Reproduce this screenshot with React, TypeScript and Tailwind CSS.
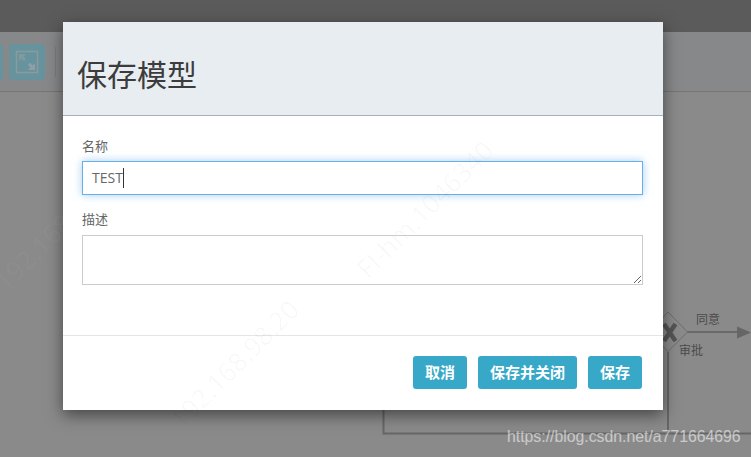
const cjk = "font-['Open_Sans','Noto_Sans_CJK_SC',sans-serif]";

// Faint diagonal IP watermark that sits over the whole screenshot
const marks = [
  { text: '192.168.98.20', left: 150, top: 345, color: 'text-black/[0.03]' },
  { text: '192.168.98', left: 470, top: 40, color: 'text-black/[0.02]' },
  { text: 'FI-hm.1046340', left: 335, top: 190, color: 'text-black/[0.03]' },
  { text: '192.168.98', left: -20, top: 220, color: 'text-white/[0.04]' },
];

function FitIcon() {
  return (
    <svg width="26" height="26" viewBox="0 0 26 26" fill="none">
      <rect x="2.500" y="2.500" width="21" height="21" stroke="#8d9a9c" strokeWidth="1.500" />
      <path d="M5 5h7l-2.400 2.400 2.600 2.600-2.200 2.200-2.600-2.600L5 12z" fill="#7f9ba2" />
      <path d="M21 21h-7l2.400-2.400-2.600-2.600 2.200-2.200 2.600 2.600L21 14z" fill="#8fa0a4" />
    </svg>
  );
}

function Diagram() {
  return (
    <svg className="absolute left-[360px] top-[300px]" width="391" height="140" viewBox="360 300 391 140" fill="none">
      <path d="M383.500 405V433.500H751" stroke="#666" strokeWidth="2" />
      <path d="M668 352V433" stroke="#666" strokeWidth="2" />
      <path d="M687 332H738" stroke="#6a6a6a" strokeWidth="2" />
      <path d="M737 326.500L751 332.500L737 338.500z" fill="#666" />
      <path d="M668 312L687.500 332L668 351.500L650 332z" fill="#8a8a8a" stroke="#6e6e6e" />
      <path d="M664 324L675.500 341M675.500 324L664 341" stroke="#555" strokeWidth="4.500" />
    </svg>
  );
}

export default function App() {
  return (
    <div className={`relative w-[751px] h-[457px] overflow-hidden bg-[#8a8a8a] ${cjk}`}>
      <div className="h-8 bg-[#5b5b5b]" />
      <div className="flex items-center h-[60px] bg-[#86888a] border-b border-[#757575]">
        <div className="w-[3px] h-9 mr-1.5 rounded-r bg-[#66939e]" />
        <div className="flex items-center justify-center w-9 h-9 rounded bg-[#66939e]">
          <FitIcon />
        </div>
        <div className="w-px h-[30px] ml-2.5 bg-[#7a7c7e]" />
      </div>

      <Diagram />
      <span className="absolute left-[696px] top-[312px] text-xs leading-4 text-[#4a4a4a]">同意</span>
      <span className="absolute left-[679px] top-[343px] text-xs leading-4 text-[#4a4a4a]">审批</span>

      <div className="absolute left-[63px] top-[22px] w-[600px] h-[388px] flex flex-col bg-white shadow-[0_5px_15px_rgba(0,0,0,0.5)]">
        <div className="flex items-center h-[94px] pl-[14px] pt-[12px] bg-[#e8edf1] border-b border-[#a8b0bc]">
          <h1 className="text-[30px] leading-10 font-normal text-[#3c3c3c]">保存模型</h1>
        </div>
        <div className="flex flex-col h-[220px] px-[19px] pt-[21px] border-b border-[#e5e5e5]">
          <label className="text-[13px] leading-[18px] text-[#666]">名称</label>
          <div className="flex items-center w-[561px] h-[34px] mt-[6px] pl-[9px] border border-[#66afe9] shadow-[0_0_8px_rgba(102,175,233,0.6)]">
            <span className="text-sm text-[#666]">TEST</span>
            <span className="w-px h-5 bg-[#333]" />
          </div>
          <label className="mt-[15px] text-[13px] leading-[18px] text-[#666]">描述</label>
          <div className="relative w-[561px] h-[50px] mt-[7px] border border-[#ccc]">
            <svg className="absolute right-0 bottom-0" width="10" height="10" viewBox="0 0 10 10" fill="none">
              <path d="M9 2L2 9M9 6L6 9" stroke="#666" />
            </svg>
          </div>
        </div>
        <div className="flex justify-end gap-[11px] pt-5 pr-[21px]">
          <button className="w-[54px] h-[33px] pb-px rounded-[3px] bg-[#37a8c7] text-[15px] font-bold text-white">取消</button>
          <button className="w-[99px] h-[33px] pb-px rounded-[3px] bg-[#37a8c7] text-[15px] font-bold text-white">保存并关闭</button>
          <button className="w-[54px] h-[33px] pb-px rounded-[3px] bg-[#37a8c7] text-[15px] font-bold text-white">保存</button>
        </div>
      </div>

      {marks.map((m, i) => (
        <span
          key={i}
          className={`absolute -rotate-45 text-[26px] whitespace-nowrap pointer-events-none ${m.color}`}
          style={{ left: m.left, top: m.top }}
        >
          {m.text}
        </span>
      ))}
      <span className="absolute left-[507px] top-[428px] font-['Liberation_Sans',sans-serif] text-[15.800px] leading-[18px] text-white/55">
        https://blog.csdn.net/a771664696
      </span>
    </div>
  );
}
